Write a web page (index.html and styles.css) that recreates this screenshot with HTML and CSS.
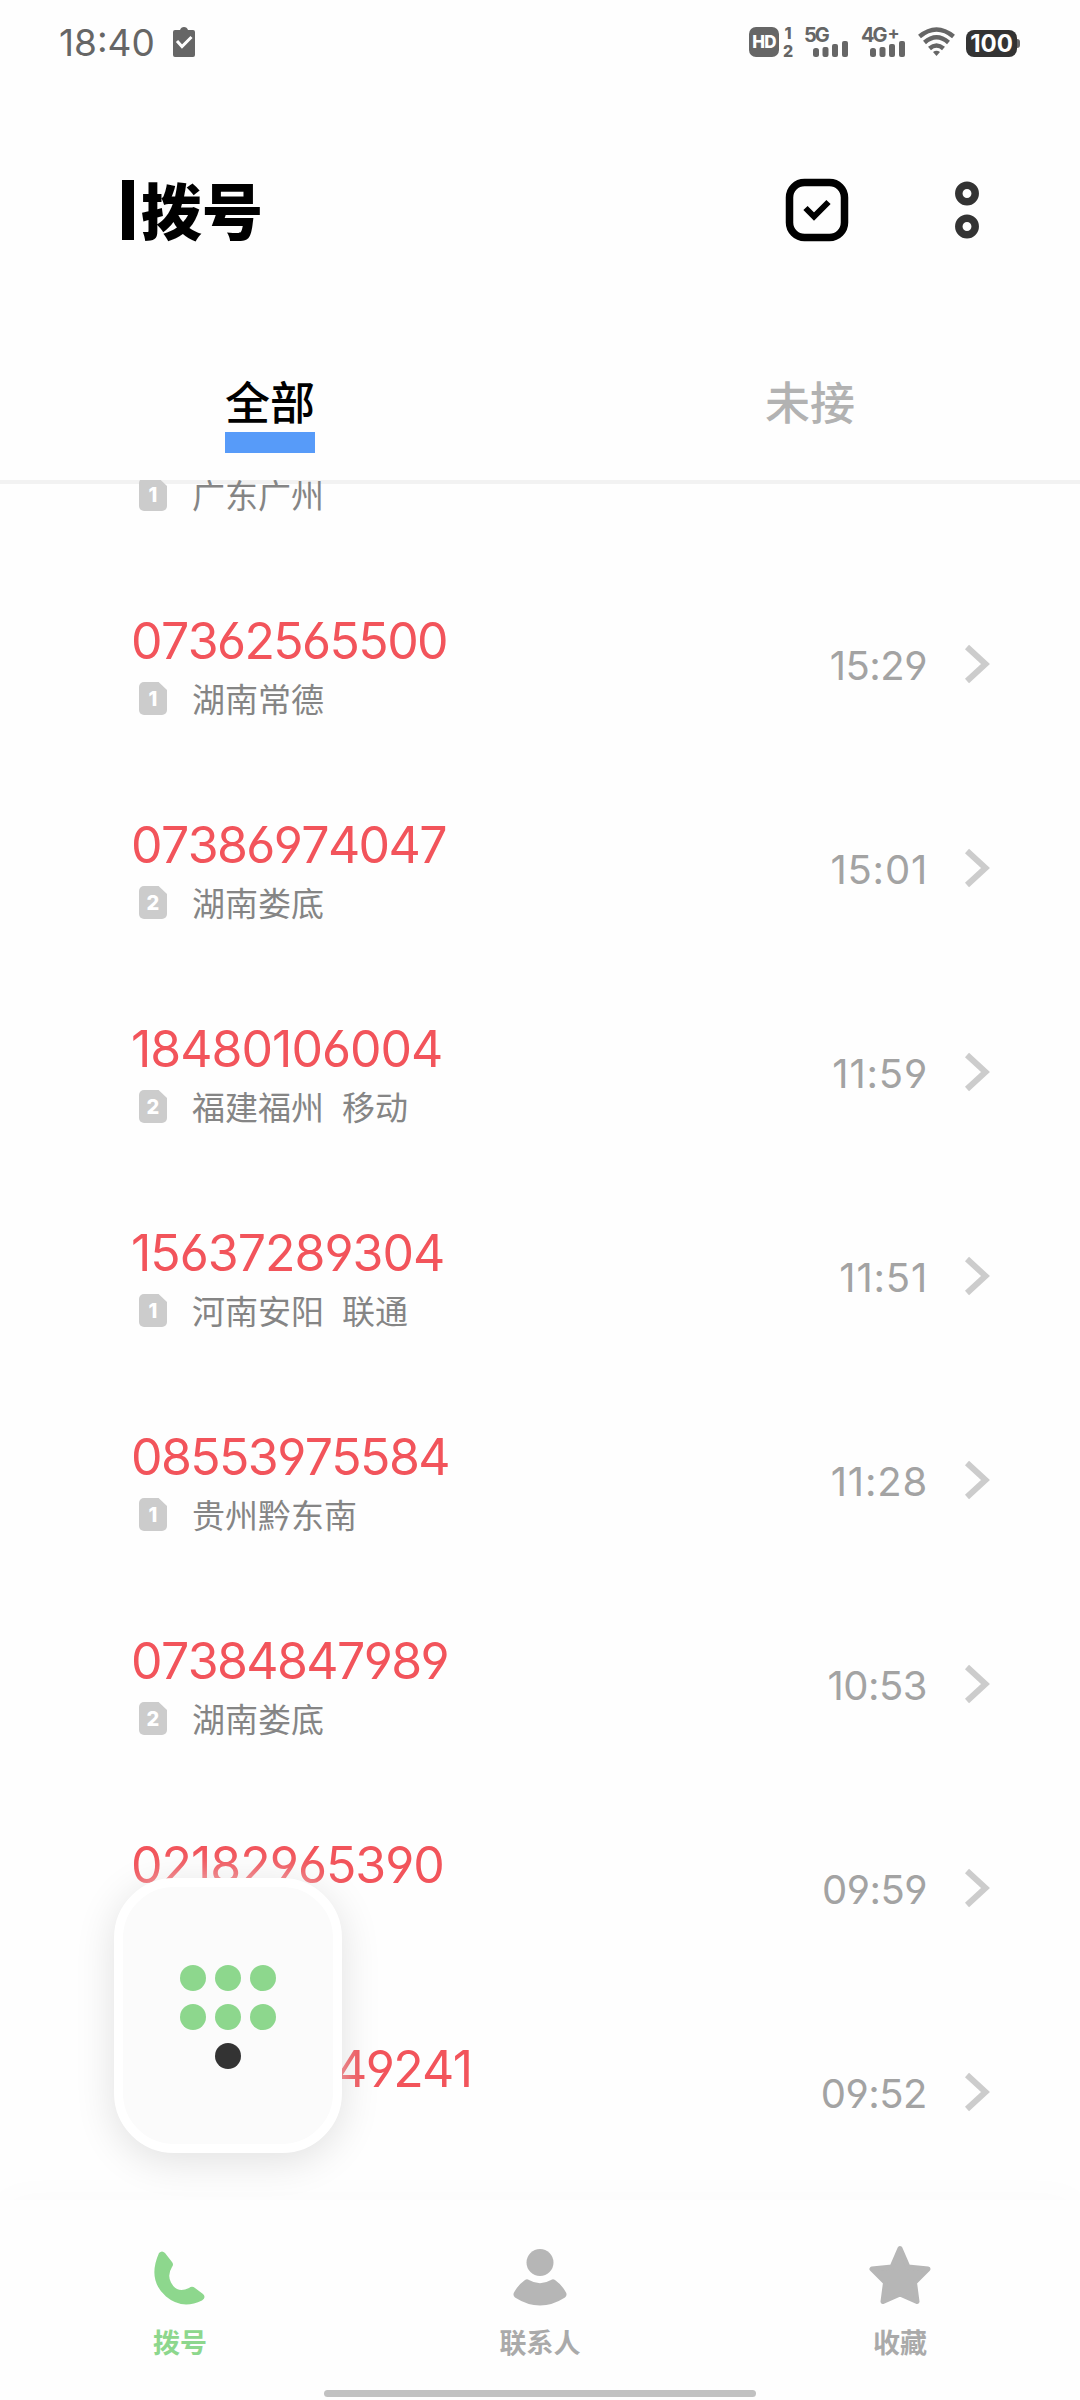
FILE: index.html
```html
<!DOCTYPE html>
<html lang="zh">

<head>
  <meta charset="UTF-8">
  <meta name="viewport" content="width=device-width, initial-scale=1.0">
  <title>拨号</title>
  <link rel="stylesheet" href="styles.css">
</head>

<body>
  <!-- 状态栏 -->
  <div class="status-bar">
    <span class="clock">18:40</span>
    <svg class="clipboard" width="22" height="30" viewBox="0 0 22 30">
      <path d="M2 3h5q1-3 4-3t4 3h5q2 0 2 2v23q0 2-2 2H2q-2 0-2-2V5q0-2 2-2z" fill="#666" />
      <path d="M4 14l5 5.500L18.500 10" fill="none" stroke="#fff" stroke-width="3" />
    </svg>
    <div class="status-right">
      <span class="hd">HD</span>
      <span class="sim-pair"><i>1</i><i>2</i></span>
      <div class="signal">
        <span>5G</span>
        <svg width="36" height="18" viewBox="0 0 36 18" fill="#666">
          <rect x="0" y="8" width="6" height="9" rx="2.500" />
          <rect x="9.500" y="7" width="6" height="10" rx="2" />
          <rect x="19" y="4" width="6" height="13" rx="2" />
          <rect x="29" y="1" width="6" height="16" rx="2" />
        </svg>
      </div>
      <div class="signal">
        <span>4G<sup>+</sup></span>
        <svg width="36" height="18" viewBox="0 0 36 18" fill="#666">
          <rect x="0" y="8" width="6" height="9" rx="2.500" />
          <rect x="9.500" y="7" width="6" height="10" rx="2" />
          <rect x="19" y="4" width="6" height="13" rx="2" />
          <rect x="29" y="1" width="6" height="16" rx="2" />
        </svg>
      </div>
      <svg class="wifi" width="37" height="30" viewBox="0 0 37 30" fill="none" stroke="#666" stroke-width="4.500">
        <path d="M1.500 9.500Q18.500-4.500 35.500 9.500" />
        <path d="M6.500 15.500Q18.500 5 30.500 15.500" />
        <path d="M11.500 21.500Q18.500 15.500 25.500 21.500" />
        <path d="M15 25q3.500-2.500 7 0l-3.500 4z" fill="#666" stroke="none" />
      </svg>
      <span class="battery">100</span>
    </div>
  </div>

  <!-- 标题 -->
  <header class="header">
    <span class="title-bar"></span>
    <h1>拨号</h1>
    <svg class="select-icon" width="64" height="64" viewBox="0 0 64 64" fill="none" stroke="#000">
      <rect x="4.500" y="4.500" width="55" height="55" rx="15" stroke-width="7.500" />
      <path d="M20.500 30l8.500 8.500L43.500 24" stroke-width="6" />
    </svg>
    <svg class="more-icon" width="24" height="58" viewBox="0 0 24 58" fill="none" stroke="#333" stroke-width="7.500">
      <circle cx="12" cy="12.500" r="8.200" />
      <circle cx="12" cy="45.500" r="8.200" />
    </svg>
  </header>

  <nav class="tabs">
    <div class="tab active"><span>全部</span></div>
    <div class="tab"><span>未接</span></div>
  </nav>

  <!-- 通话记录 -->
  <main class="calls">
    <ul class="call-list">
      <li class="call">
        <div class="info">
          <p class="number"></p>
          <p class="place"><b class="sim">1</b>广东广州</p>
        </div>
      </li>
      <li class="call">
        <div class="info">
          <p class="number">07362565500</p>
          <p class="place"><b class="sim">1</b>湖南常德</p>
        </div>
        <time>15:29</time>
        <svg class="arrow" viewBox="0 0 26 40"><path d="M3 3l18.500 17L3 37" /></svg>
      </li>
      <li class="call">
        <div class="info">
          <p class="number">07386974047</p>
          <p class="place"><b class="sim">2</b>湖南娄底</p>
        </div>
        <time class="loose">15:01</time>
        <svg class="arrow" viewBox="0 0 26 40"><path d="M3 3l18.500 17L3 37" /></svg>
      </li>
      <li class="call">
        <div class="info">
          <p class="number loose">18480106004</p>
          <p class="place"><b class="sim">2</b>福建福州<span>移动</span></p>
        </div>
        <time class="loose">11:59</time>
        <svg class="arrow" viewBox="0 0 26 40"><path d="M3 3l18.500 17L3 37" /></svg>
      </li>
      <li class="call">
        <div class="info">
          <p class="number loose">15637289304</p>
          <p class="place"><b class="sim">1</b>河南安阳<span>联通</span></p>
        </div>
        <time class="loose">11:51</time>
        <svg class="arrow" viewBox="0 0 26 40"><path d="M3 3l18.500 17L3 37" /></svg>
      </li>
      <li class="call">
        <div class="info">
          <p class="number">08553975584</p>
          <p class="place"><b class="sim">1</b>贵州黔东南</p>
        </div>
        <time class="loose">11:28</time>
        <svg class="arrow" viewBox="0 0 26 40"><path d="M3 3l18.500 17L3 37" /></svg>
      </li>
      <li class="call">
        <div class="info">
          <p class="number">07384847989</p>
          <p class="place"><b class="sim">2</b>湖南娄底</p>
        </div>
        <time>10:53</time>
        <svg class="arrow" viewBox="0 0 26 40"><path d="M3 3l18.500 17L3 37" /></svg>
      </li>
      <li class="call">
        <div class="info">
          <p class="number loose">02182965390</p>
          <p class="place"></p>
        </div>
        <time>09:59</time>
        <svg class="arrow" viewBox="0 0 26 40"><path d="M3 3l18.500 17L3 37" /></svg>
      </li>
      <li class="call">
        <div class="info">
          <p class="number tail">49241</p>
          <p class="place"></p>
        </div>
        <time>09:52</time>
        <svg class="arrow" viewBox="0 0 26 40"><path d="M3 3l18.500 17L3 37" /></svg>
      </li>
    </ul>
  </main>

  <!-- 拨号盘按钮 -->
  <button class="dialpad">
    <i></i><i></i><i></i>
    <i></i><i></i><i></i>
    <i class="dark"></i>
  </button>

  <!-- 底部导航 -->
  <footer class="bottom-nav">
    <div class="nav-item active">
      <svg width="64" height="64" viewBox="0 0 64 64">
        <path d="M11 9q3-3 6 0l7 9q2 2.500 0 5-5 8-1 15.500 6 11.500 18 5.500 3-2.500 6 0l8 6q3.500 3.500-1 6.500-20 9.500-36-4Q-1 36 11 9z" />
      </svg>
      <span>拨号</span>
    </div>
    <div class="nav-item">
      <svg width="64" height="64" viewBox="0 0 64 64">
        <circle cx="32" cy="18.500" r="13.500" />
        <path d="M17 36q2-1.500 4 0 11 6.500 22 0 2-1.500 4 0 7 5 11 12.500 1.500 3-1 5-25 16-50 0-2.500-2-1-5Q10 41 17 36z" />
      </svg>
      <span>联系人</span>
    </div>
    <div class="nav-item">
      <svg width="64" height="64" viewBox="0 0 64 64" stroke-width="5" stroke-linejoin="round">
        <path class="star" d="M32 4.500L40 23 60 25 46.500 38.500 49 57.500 32 50 15 57.500 17.500 38.500 4 25 24 23z" />
      </svg>
      <span>收藏</span>
    </div>
    <div class="home-line"></div>
  </footer>
</body>

</html>
```
FILE: styles.css
```css
* {
  box-sizing: border-box;
  margin: 0;
  padding: 0;
}

body {
  display: flex;
  flex-direction: column;
  width: 1080px;
  height: 2400px;
  overflow: hidden;
  position: relative;
  background-color: #fefefe;
  font-family: Inter, "Noto Sans CJK SC", sans-serif;
  font-kerning: none;
}

i {
  font-style: normal;
}

/* 状态栏 */
.status-bar {
  display: flex;
  height: 84px;
  padding: 0 60px 0 59px;
  align-items: center;
  color: #666;
}

.clock {
  width: 114px;
  font-size: 37px;
}

.status-right {
  display: flex;
  align-items: center;
  margin-left: auto;
  height: 30px;
}

.hd {
  width: 30px;
  height: 30px;
  border-radius: 7px;
  background-color: #666;
  color: #fff;
  font-size: 17px;
  font-weight: 800;
  line-height: 30px;
  letter-spacing: -0.8px;
  text-align: center;
}

.sim-pair {
  display: flex;
  flex-direction: column;
  justify-content: space-between;
  width: 14px;
  height: 30px;
  margin: 0 9px 0 2px;
  font-size: 16px;
  font-weight: 800;
  line-height: 12px;
  text-align: center;
}

.signal {
  display: flex;
  flex-direction: column;
  align-items: flex-end;
  width: 45px;
  height: 31px;
  margin-right: 12px;
}

.signal span {
  align-self: flex-start;
  height: 13px;
  font-size: 20px;
  font-weight: 700;
  line-height: 17px;
  letter-spacing: -2px;
}

.signal sup {
  margin-left: 2px;
  font-size: 18px;
  line-height: 0;
  vertical-align: 3px;
}

.wifi {
  margin-right: 11px;
}

.battery {
  position: relative;
  width: 51px;
  height: 27px;
  margin: 2px 3px 0 0;
  border-radius: 8px;
  background-color: #333;
  color: #fff;
  font-size: 24px;
  font-weight: 700;
  line-height: 27px;
  text-align: center;
}

.battery::after {
  content: "";
  position: absolute;
  right: -3px;
  top: 9px;
  width: 3px;
  height: 9px;
  border-radius: 0 3px 3px 0;
  background-color: #666;
}

/* 标题 */
.header {
  display: flex;
  align-items: center;
  height: 252px;
  padding: 0 101px 0 122px;
}

.title-bar {
  width: 12px;
  height: 60px;
  margin-right: 7px;
  background-color: #000;
}

.header h1 {
  padding-top: 5px;
  font-size: 61px;
  font-weight: 900;
  line-height: 60px;
}

.select-icon {
  margin-left: auto;
}

.more-icon {
  margin-left: 106px;
}

.tabs {
  display: flex;
  height: 148px;
  border-bottom: 4px solid #f2f2f2;
}

.tab {
  flex: 1;
  padding-top: 39px;
  text-align: center;
  font-size: 45px;
  font-weight: 500;
  line-height: 58px;
  color: #b2b2b2;
}

.tab span {
  display: inline-block;
  height: 78px;
}

.tab.active {
  color: #000;
}

.tab.active span {
  border-bottom: 21px solid #579bf9;
}

/* 通话记录 */
.calls {
  flex: 1;
  margin-top: -4px;
  overflow: hidden;
}

.call-list {
  margin-top: -122px;
  list-style: none;
}

.call {
  display: flex;
  align-items: center;
  height: 204px;
  padding: 0 90px 0 131px;
}

.info {
  flex: 1;
  padding-top: 2px;
}

.number {
  height: 56px;
  font-size: 50px;
  line-height: 56px;
  letter-spacing: -1.6px;
  font-feature-settings: "cv03", "cv04";
  color: #f2545b;
}

.number.loose {
  letter-spacing: -1px;
}

.number.tail {
  padding-left: 204px;
}

.place {
  display: flex;
  align-items: center;
  height: 36px;
  margin-top: 13px;
  padding-left: 8px;
  font-size: 33px;
  line-height: 36px;
  color: #858585;
}

.place span {
  margin-left: 18px;
}

.sim {
  width: 28px;
  height: 33px;
  margin: -2px 25px 0 0;
  border-radius: 5px;
  background-color: #ccc;
  clip-path: polygon(0 0, 70% 0, 100% 24%, 100% 100%, 0 100%);
  color: #fff;
  font-size: 20px;
  font-weight: 800;
  line-height: 35px;
  text-align: center;
}

.call time {
  margin-right: 37px;
  padding-top: 2px;
  font-size: 40px;
  letter-spacing: -0.5px;
  font-feature-settings: "cv03", "cv04";
  color: #a3a3a3;
}

.call time.loose {
  margin-right: 36px;
  letter-spacing: 0.8px;
}

.arrow {
  width: 26px;
  height: 40px;
  fill: none;
  stroke: #ccc;
  stroke-width: 6;
}

/* 拨号盘悬浮按钮 */
.dialpad {
  position: absolute;
  left: 114px;
  top: 1878px;
  width: 228px;
  height: 275px;
  display: grid;
  grid-template-columns: repeat(3, 26px);
  grid-auto-rows: 26px;
  gap: 13px 8.700px;
  place-content: center;
  padding-top: 2px;
  border: 9px solid #fff;
  border-radius: 60px;
  background-color: #fbfbfb;
  box-shadow: 0 8px 40px rgba(0, 0, 0, 0.12), 0 0 30px rgba(255, 255, 255, 0.7);
}

.dialpad i {
  border-radius: 50%;
  background-color: #8dd78d;
}

.dialpad .dark {
  grid-column: 2;
  background-color: #333;
}

/* 底部导航 */
.bottom-nav {
  position: relative;
  display: flex;
  height: 200px;
  background-color: #fefefe;
  box-shadow: 0 -2px 40px rgba(0, 0, 0, 0.02);
}

.nav-item {
  flex: 1;
  display: flex;
  flex-direction: column;
  align-items: center;
  padding-top: 44px;
  color: #aaa;
  fill: #b6b6b6;
  font-size: 27px;
  font-weight: 700;
  line-height: 36px;
}

.nav-item span {
  margin-top: 18px;
}

.nav-item.active {
  color: #8dd78d;
  fill: #8dd78d;
}

.star {
  stroke: #b6b6b6;
}

.home-line {
  position: absolute;
  left: 324px;
  bottom: 3px;
  width: 432px;
  height: 7px;
  border-radius: 4px;
  background-color: #c1c1c1;
}
```
